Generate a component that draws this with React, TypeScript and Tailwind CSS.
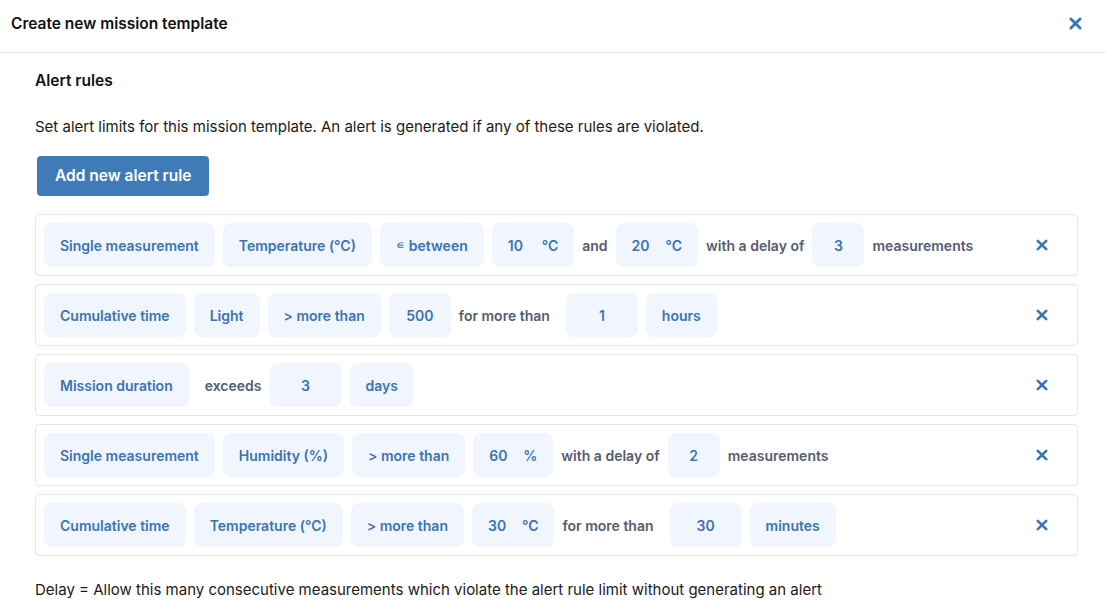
import React from 'react';

type Part =
  | { kind: 'chip'; label: React.ReactNode }
  | { kind: 'num'; value: string; w: string }
  | { kind: 'unit'; value: string; unit: string }
  | { kind: 'text'; label: string; cls?: string };

const rules: Part[][] = [
  [
    { kind: 'chip', label: 'Single measurement' },
    { kind: 'chip', label: 'Temperature (°C)' },
    {
      kind: 'chip',
      label: (
        <>
          <span className="text-[12px] font-normal mr-[4px]">∊</span>between
        </>
      ),
    },
    { kind: 'unit', value: '10', unit: '°C' },
    { kind: 'text', label: 'and' },
    { kind: 'unit', value: '20', unit: '°C' },
    { kind: 'text', label: 'with a delay of' },
    { kind: 'num', value: '3', w: 'w-[52px]' },
    { kind: 'text', label: 'measurements' },
  ],
  [
    { kind: 'chip', label: 'Cumulative time' },
    { kind: 'chip', label: 'Light' },
    { kind: 'chip', label: '> more than' },
    { kind: 'num', value: '500', w: 'w-[62px]' },
    { kind: 'text', label: 'for more than', cls: 'mr-2' },
    { kind: 'num', value: '1', w: 'w-[72px]' },
    { kind: 'chip', label: 'hours' },
  ],
  [
    { kind: 'chip', label: 'Mission duration' },
    { kind: 'text', label: 'exceeds', cls: 'ml-2' },
    { kind: 'num', value: '3', w: 'w-[72px]' },
    { kind: 'chip', label: 'days' },
  ],
  [
    { kind: 'chip', label: 'Single measurement' },
    { kind: 'chip', label: 'Humidity (%)' },
    { kind: 'chip', label: '> more than' },
    { kind: 'unit', value: '60', unit: '%' },
    { kind: 'text', label: 'with a delay of' },
    { kind: 'num', value: '2', w: 'w-[52px]' },
    { kind: 'text', label: 'measurements' },
  ],
  [
    { kind: 'chip', label: 'Cumulative time' },
    { kind: 'chip', label: 'Temperature (°C)' },
    { kind: 'chip', label: '> more than' },
    { kind: 'unit', value: '30', unit: '°C' },
    { kind: 'text', label: 'for more than', cls: 'mr-2' },
    { kind: 'num', value: '30', w: 'w-[72px]' },
    { kind: 'chip', label: 'minutes' },
  ],
];

function CloseIcon({ size = 12 }: { size?: number }) {
  return (
    <svg width={size} height={size} viewBox="0 0 12 12" fill="none">
      <path d="M1.8 1.8 10.2 10.2M10.2 1.8 1.8 10.2" stroke="#3b74b3" strokeWidth="2.6" strokeLinecap="round" />
    </svg>
  );
}

function RulePart({ p }: { p: Part }) {
  const chip = 'h-11 flex items-center rounded-lg bg-[#f1f5fd] text-[14px] font-semibold text-[#3b74b3]';
  if (p.kind === 'chip') return <div className={`${chip} px-4`}>{p.label}</div>;
  if (p.kind === 'num') return <div className={`${chip} ${p.w} justify-center`}>{p.value}</div>;
  if (p.kind === 'unit')
    return (
      <div className={`${chip} px-4`}>
        <span className="w-[34px]">{p.value}</span>
        <span>{p.unit}</span>
      </div>
    );
  return <span className={`text-[14px] font-semibold text-[#545d6e] ${p.cls ?? ''}`}>{p.label}</span>;
}

export default function App() {
  return (
    <div className="w-[1106px] h-[606px] bg-white font-['Inter',sans-serif] text-[#111] overflow-hidden">
      <div className="h-[53px] flex items-start justify-between pl-[11px] pr-[24px] pt-[14px] border-b border-[#e6e6ec]">
        <h1 className="text-[15.5px] leading-5 font-semibold">Create new mission template</h1>
        <button className="mt-[3px]">
          <CloseIcon size={13} />
        </button>
      </div>
      <div className="pl-[35px] pr-[28px] pt-[18px]">
        <h2 className="text-[15.5px] leading-5 font-semibold">Alert rules</h2>
        <p className="mt-[26px] text-[15px] leading-5 text-[#1a1a1a]">
          Set alert limits for this mission template. An alert is generated if any of these rules are violated.
        </p>
        <button className="mt-[19px] ml-[2px] h-10 px-[18px] rounded bg-[#3f7bb6] text-white text-[15.5px] font-semibold">
          Add new alert rule
        </button>
        <div className="mt-[18px] flex flex-col gap-2">
          {rules.map((r, i) => (
            <div key={i} className="h-[62px] flex items-center gap-2 px-2 border border-[#e5e7eb] rounded">
              {r.map((p, j) => (
                <RulePart key={j} p={p} />
              ))}
              <button className="ml-auto mr-[21px]">
                <CloseIcon />
              </button>
            </div>
          ))}
        </div>
        <p className="mt-6 text-[15px] leading-5 text-[#1a1a1a]">
          Delay = Allow this many consecutive measurements which violate the alert rule limit without generating an alert
        </p>
      </div>
    </div>
  );
}
